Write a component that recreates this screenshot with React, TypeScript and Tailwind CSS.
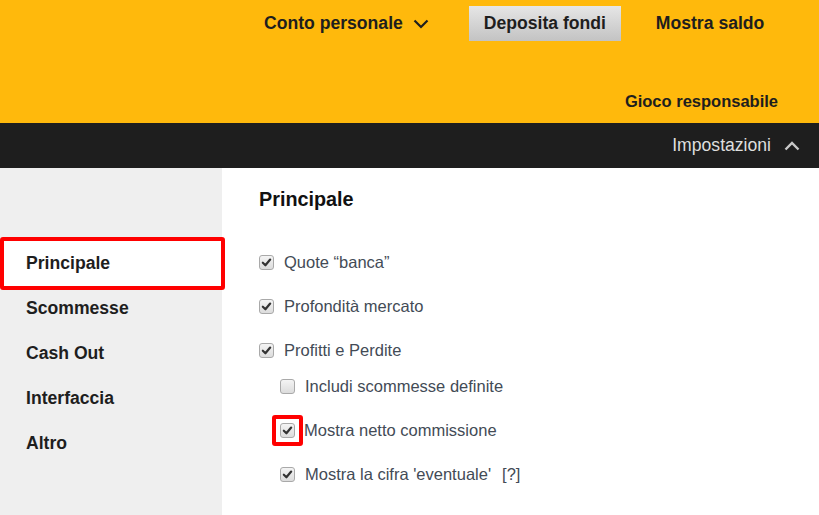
import React from "react";

function Check({ checked }: { checked: boolean }) {
  return (
    <span className="relative inline-flex h-[15px] w-[15px] shrink-0 items-center justify-center rounded-[3px] border border-[#a9a9a9] bg-gradient-to-b from-[#f4f4f4] to-[#dcdcdc]">
      {checked && (
        <svg viewBox="0 0 12 12" className="h-[11px] w-[11px]">
          <path d="M2 6.3 L4.8 9 L10 2.8" fill="none" stroke="#333" strokeWidth="2.4" strokeLinecap="round" strokeLinejoin="round" />
        </svg>
      )}
    </span>
  );
}

function Option({ label, checked, indent, marked, extra }: { label: string; checked: boolean; indent?: boolean; marked?: boolean; extra?: string }) {
  return (
    <div className={`flex h-[44px] items-center ${indent ? "pl-[21px]" : ""}`}>
      <span className={`flex items-center ${marked ? "-ml-[8px] rounded-[3px] border-[4px] border-[#ff0000] p-[4px]" : ""}`}>
        <Check checked={checked} />
      </span>
      <span className={`${marked ? "ml-[1px]" : "ml-[10px]"} text-[16.5px] text-[#434b56]`}>{label}</span>
      {extra && <span className="ml-[11px] text-[16.5px] text-[#434b56]">{extra}</span>}
    </div>
  );
}

export default function App() {
  const menu = ["Scommesse", "Cash Out", "Interfaccia", "Altro"];
  return (
    <div className="h-[515px] w-[819px] overflow-hidden bg-white font-['Liberation_Sans',Arial,sans-serif]">
      {/* Top bar */}
      <header className="flex h-[123px] flex-col bg-[#ffb90c] text-[#1e1e1e]">
        <div className="flex h-[48px] items-start pt-[6px]">
          <div className="ml-[264px] flex h-[35px] items-center gap-[10px] text-[17.6px] font-bold">
            Conto personale
            <svg viewBox="0 0 16 10" className="h-[10px] w-[16px]">
              <path d="M1.5 1.5 L8 8 L14.5 1.5" fill="none" stroke="#1e1e1e" strokeWidth="2.2" />
            </svg>
          </div>
          <button className="ml-[40px] flex h-[35px] w-[152px] items-center justify-center bg-gradient-to-b from-[#e6e6e6] to-[#c3c3c3] text-[17.6px] font-bold text-[#1e1e1e]">
            Deposita fondi
          </button>
          <div className="ml-[35px] flex h-[35px] items-center text-[17.6px] font-bold">Mostra saldo</div>
        </div>
        <div className="flex flex-1 items-end justify-end pb-[9px] pr-[41px] text-[16.5px] font-bold">Gioco responsabile</div>
      </header>

      {/* Dark bar */}
      <div className="flex h-[45px] items-center justify-end bg-[#1e1e1e] pr-[19px] text-[17.6px] text-[#dedede]">
        Impostazioni
        <svg viewBox="0 0 16 10" className="ml-[13px] h-[10px] w-[16px]">
          <path d="M1.5 8.5 L8 2 L14.5 8.5" fill="none" stroke="#c8c8c8" strokeWidth="2.4" />
        </svg>
      </div>

      <div className="flex h-[347px]">
        {/* Sidebar */}
        <aside className="w-[222px] shrink-0 bg-[#efefef] pt-[69px]">
          <div className="relative z-10 mb-[-4px] flex h-[53px] w-[225px] items-center rounded-[3px] border-[4px] border-[#ff0000] bg-white pl-[22px] text-[17.6px] font-bold text-[#1e1e1e]">
            Principale
          </div>
          {menu.map((m) => (
            <div key={m} className="flex h-[45px] items-center pl-[26px] text-[17.6px] font-bold text-[#1e1e1e]">
              {m}
            </div>
          ))}
        </aside>

        {/* Content */}
        <main className="flex-1 pl-[37px] pt-[17px]">
          <h2 className="text-[19.8px] font-bold text-[#111]">Principale</h2>
          <div className="mt-[26px] flex flex-col">
            <Option label="Quote “banca”" checked />
            <Option label="Profondità mercato" checked />
            <Option label="Profitti e Perdite" checked />
            <div className="-mt-[8px]" />
            <Option label="Includi scommesse definite" checked={false} indent />
            <Option label="Mostra netto commissione" checked indent marked />
            <Option label="Mostra la cifra 'eventuale'" checked indent extra="[?]" />
          </div>
        </main>
      </div>
    </div>
  );
}
